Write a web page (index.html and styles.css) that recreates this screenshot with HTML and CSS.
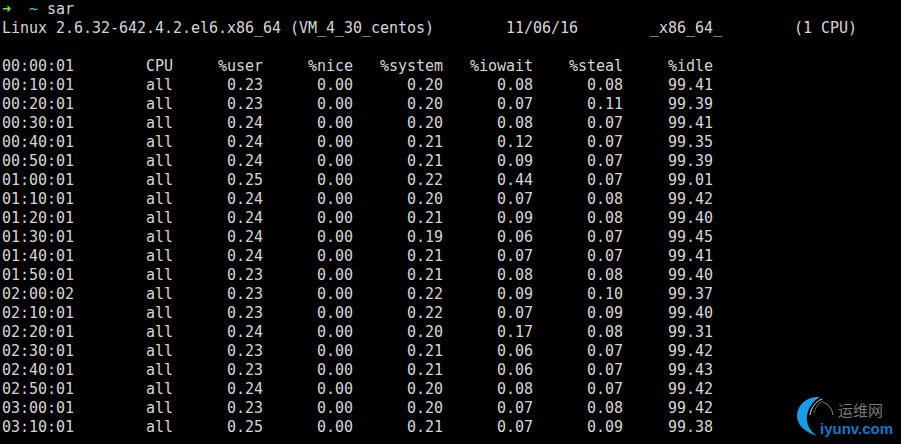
FILE: index.html
```html
<!DOCTYPE html>
<html lang="en">
<head>
<meta charset="utf-8">
<title>sar</title>
<link rel="stylesheet" href="styles.css">
</head>
<body>
<main class="terminal">
<pre class="output"><span class="arrow">➜</span>  <span class="tilde">~</span> sar
Linux 2.6.32-642.4.2.el6.x86_64 (VM_4_30_centos)        11/06/16        _x86_64_        (1 CPU)

00:00:01        CPU     %user     %nice   %system   %iowait    %steal     %idle
00:10:01        all      0.23      0.00      0.20      0.08      0.08     99.41
00:20:01        all      0.23      0.00      0.20      0.07      0.11     99.39
00:30:01        all      0.24      0.00      0.20      0.08      0.07     99.41
00:40:01        all      0.24      0.00      0.21      0.12      0.07     99.35
00:50:01        all      0.24      0.00      0.21      0.09      0.07     99.39
01:00:01        all      0.25      0.00      0.22      0.44      0.07     99.01
01:10:01        all      0.24      0.00      0.20      0.07      0.08     99.42
01:20:01        all      0.24      0.00      0.21      0.09      0.08     99.40
01:30:01        all      0.24      0.00      0.19      0.06      0.07     99.45
01:40:01        all      0.24      0.00      0.21      0.07      0.07     99.41
01:50:01        all      0.23      0.00      0.21      0.08      0.08     99.40
02:00:02        all      0.23      0.00      0.22      0.09      0.10     99.37
02:10:01        all      0.23      0.00      0.22      0.07      0.09     99.40
02:20:01        all      0.24      0.00      0.20      0.17      0.08     99.31
02:30:01        all      0.23      0.00      0.21      0.06      0.07     99.42
02:40:01        all      0.23      0.00      0.21      0.06      0.07     99.43
02:50:01        all      0.24      0.00      0.20      0.08      0.07     99.42
03:00:01        all      0.23      0.00      0.20      0.07      0.08     99.42
03:10:01        all      0.25      0.00      0.21      0.07      0.09     99.38</pre>
<aside class="logo">
<svg class="logo-mark" width="40" height="44" viewBox="0 0 40 44" aria-hidden="true">
<path d="M24 1C11 0 1 9 1 20c0 9 8 16 20 20C14 35 10 28 11 20 12 12 17 5 24 1Z" fill="#1a9be6"/>
<path d="M26 3C19 6 15 12 14 19" fill="none" stroke="#cfe6f5" stroke-width="1"/>
<path d="M27 5C22 8 19 12 18 17" fill="none" stroke="#3d7fa8" stroke-width="1"/>
<path d="M27 6c5 2 9 6 10 13" fill="none" stroke="#8a8f94" stroke-width="1"/>
</svg>
<span class="logo-cn">运维网</span>
<span class="logo-en">iyunv.com</span>
</aside>
</main>
</body>
</html>
```
FILE: styles.css
```css
html, body {
  margin: 0;
  padding: 0;
  background: #000;
}
.terminal {
  position: relative;
  width: 901px;
  height: 444px;
  overflow: hidden;
  background: #000;
}
.output {
  margin: 0;
  padding: 0 0 0 2px;
  font-family: "DejaVu Sans Mono", monospace;
  font-size: 15px;
  line-height: 19px;
  letter-spacing: -0.03px;
  color: #d6d6d6;
}
.arrow {
  color: #5fe04a;
  font-weight: bold;
}
.tilde {
  color: #4fc3e8;
}
.logo {
  position: absolute;
  left: 796px;
  top: 396px;
  width: 105px;
  height: 48px;
}
.logo-mark {
  position: absolute;
  left: 0;
  top: 0;
}
.logo-cn {
  position: absolute;
  left: 42px;
  top: 4px;
  font-family: "Noto Sans CJK SC", sans-serif;
  font-size: 15px;
  line-height: 20px;
  color: #77797b;
}
.logo-en {
  position: absolute;
  left: 24px;
  top: 24px;
  font-family: "Liberation Sans", sans-serif;
  font-size: 15px;
  line-height: 18px;
  font-weight: bold;
  color: #1478c8;
}
```
